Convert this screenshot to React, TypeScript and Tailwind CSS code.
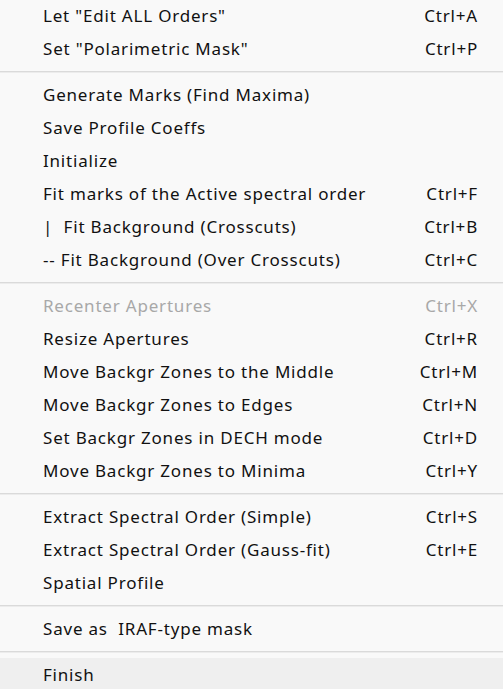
type Item = { label: string; shortcut?: string; disabled?: boolean; active?: boolean };

const groups: Item[][] = [
  [
    { label: 'Let "Edit ALL Orders"', shortcut: 'Ctrl+A' },
    { label: 'Set "Polarimetric Mask"', shortcut: 'Ctrl+P' },
  ],
  [
    { label: 'Generate Marks (Find Maxima)' },
    { label: 'Save Profile Coeffs' },
    { label: 'Initialize' },
    { label: 'Fit marks of the Active spectral order', shortcut: 'Ctrl+F' },
    { label: '|  Fit Background (Crosscuts)', shortcut: 'Ctrl+B' },
    { label: '-- Fit Background (Over Crosscuts)', shortcut: 'Ctrl+C' },
  ],
  [
    { label: 'Recenter Apertures', shortcut: 'Ctrl+X', disabled: true },
    { label: 'Resize Apertures', shortcut: 'Ctrl+R' },
    { label: 'Move Backgr Zones to the Middle', shortcut: 'Ctrl+M' },
    { label: 'Move Backgr Zones to Edges', shortcut: 'Ctrl+N' },
    { label: 'Set Backgr Zones in DECH mode', shortcut: 'Ctrl+D' },
    { label: 'Move Backgr Zones to Minima', shortcut: 'Ctrl+Y' },
  ],
  [
    { label: 'Extract Spectral Order (Simple)', shortcut: 'Ctrl+S' },
    { label: 'Extract Spectral Order (Gauss-fit)', shortcut: 'Ctrl+E' },
    { label: 'Spatial Profile' },
  ],
  [{ label: 'Save as  IRAF-type mask' }],
  [{ label: 'Finish', active: true }],
];

function Row({ item }: { item: Item }) {
  return (
    <div
      className={`flex items-center justify-between h-[33px] pl-[43px] pr-[25px] whitespace-pre ${
        item.active ? 'bg-[#efefef]' : ''
      } ${item.disabled ? 'text-[#a8a8a8]' : 'text-[#111111]'}`}
    >
      <span>{item.label}</span>
      {item.shortcut && <span>{item.shortcut}</span>}
    </div>
  );
}

export default function App() {
  return (
    <div
      className="w-[503px] h-[689px] overflow-hidden bg-[#f9f9f9] text-[17px] tracking-[0.8px]"
      style={{ fontFamily: '"Noto Sans", "Noto Sans CJK SC", sans-serif' }}
    >
      <div className="-mt-[1px] flex flex-col">
        {groups.map((group, gi) => (
          <div key={gi}>
            {gi > 0 && (
              <div className="h-[13px] pt-[6px]">
                <div className="h-[2px] border-t border-[#dadada] bg-[#ececec]" />
              </div>
            )}
            {group.map((item) => (
              <Row key={item.label} item={item} />
            ))}
          </div>
        ))}
      </div>
    </div>
  );
}
